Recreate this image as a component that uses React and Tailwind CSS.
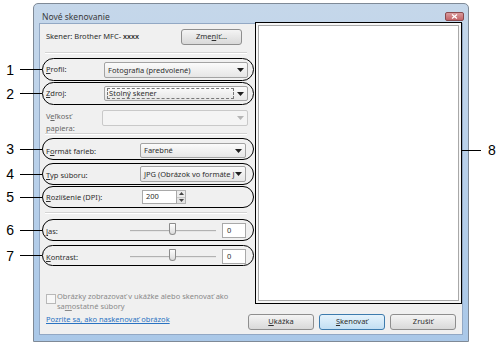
import React from "react";

// small black triangle used by the combo boxes
const Arrow = ({ color = "#1f1f1f" }) => (
  <svg width="7" height="4" viewBox="0 0 7 4" className="shrink-0">
    <path d="M0 0h7L3.5 4z" fill={color} />
  </svg>
);

const Combo = ({ className = "", children, focus, disabled }) => (
  <div
    className={`h-full flex items-center justify-between rounded-[2px] border pl-[2px] pr-[3px] ${
      disabled
        ? "border-[#c9c9c9] bg-[#f4f4f4]"
        : "border-[#a3a3a3] bg-gradient-to-b from-[#fbfbfb] to-[#e6e6e6]"
    } ${className}`}
  >
    {focus ? (
      <span className="flex-1 mr-[3px] h-[11px] flex items-center border border-dashed border-[#777] pl-[1px] leading-[9px]">
        {children}
      </span>
    ) : (
      <span className="pl-[1px] leading-[11px] whitespace-nowrap overflow-hidden">{children}</span>
    )}
    <Arrow color={disabled ? "#b5b5b5" : "#1f1f1f"} />
  </div>
);

const Sep = () => (
  <div className="w-[202px] h-[2px] border-t border-b border-t-[#d3d3d3] border-b-white" />
);

const Slider = () => (
  <div className="w-[86px] h-full relative flex items-center">
    <div className="w-full h-[2px] border-t border-b border-t-[#b2b2b2] border-b-[#e6e6e6]" />
    <div className="absolute left-[39px] top-0 w-[7px] h-[12px] rounded-t-[1px] rounded-b-[4px] border border-[#8c8c8c] bg-gradient-to-b from-[#fdfdfd] to-[#dcdcdc]" />
  </div>
);

const Btn = ({ children, primary }) => (
  <div
    className={`w-[66px] h-[16px] flex items-center justify-center rounded-[3px] border ${
      primary
        ? "border-[#3d7bad] bg-gradient-to-b from-[#e5f3fc] to-[#c2dff3]"
        : "border-[#8e8e8e] bg-gradient-to-b from-[#f4f4f4] to-[#d9d9d9]"
    }`}
  >
    {children}
  </div>
);

const callouts = [
  { n: "1", top: 58, h: 23 },
  { n: "2", top: 82, h: 23 },
  { n: "3", top: 138, h: 22 },
  { n: "4", top: 163, h: 22 },
  { n: "5", top: 186, h: 22 },
  { n: "6", top: 219, h: 22 },
  { n: "7", top: 245, h: 21 },
];

export default function App() {
  return (
    <div className="relative w-[500px] h-[346px] bg-white overflow-hidden font-['Noto_Sans',sans-serif] text-[7.5px] text-[#2e2e2e]">
      {/* dialog window */}
      <div className="ml-[33px] pt-[3px]">
        <div className="w-[436px] h-[339px] flex flex-col rounded-t-[5px] border border-[#7f8a97] bg-gradient-to-b from-[#c5d7ea] via-[#b8d0ea] to-[#aac8e8]">
          <div className="h-[19px] flex items-end justify-between pl-[8px] pr-[4px] pb-[2px]">
            <span className="text-[8.5px] leading-[9px] text-[#3a3a3a]">Nové skenovanie</span>
            <div className="w-[19px] h-[9px] flex items-center justify-center rounded-[2px] border border-[#8a4a4e] bg-gradient-to-b from-[#d99a9d] to-[#c26368]">
              <svg width="7" height="5" viewBox="0 0 7 5">
                <path d="M1 0.5l5 4M6 0.5l-5 4" stroke="#fff" strokeWidth="1.3" />
              </svg>
            </div>
          </div>

          <div className="mx-[5px] h-[312px] border border-[#92a8c4] bg-[#f0f0f0] flex">
            {/* left settings column */}
            <div className="w-[208px] shrink-0 pl-[6px] flex flex-col">
              <div className="mt-[5px] h-[16px] flex items-center justify-between w-[196px]">
                <span>
                  Skener: Brother MFC- <span className="text-[6px] font-bold">XXXX</span>
                </span>
                <div className="w-[61px] h-[16px] flex items-center justify-center rounded-[3px] border border-[#8e8e8e] bg-gradient-to-b from-[#f4f4f4] to-[#d9d9d9]">
                  Zme<u>n</u>iť...
                </div>
              </div>
              <div className="mt-[7px] -ml-[1px]">
                <Sep />
              </div>

              <div className="mt-[8px] h-[16px] flex items-center">
                <span className="w-[59px]">
                  <u>P</u>rofil:
                </span>
                <Combo className="w-[146px]">Fotografia (predvolené)</Combo>
              </div>
              <div className="mt-[8px] h-[15px] flex items-center">
                <span className="w-[59px]">
                  <u>Z</u>droj:
                </span>
                <Combo className="w-[146px]" focus>
                  Stolný skener
                </Combo>
              </div>
              <div className="mt-[9px] h-[23px] flex items-start">
                <span className="w-[59px] leading-[12px] text-[#666]">
                  V<u>e</u>ľkosť
                  <br />
                  papiera:
                </span>
                <div className="h-[16px]">
                  <Combo className="w-[146px]" disabled />
                </div>
              </div>
              <div className="-ml-[1px]">
                <Sep />
              </div>

              <div className="mt-[8px] h-[15px] flex items-center">
                <span className="w-[94px] pt-[3px]">
                  F<u>o</u>rmát farieb:
                </span>
                <Combo className="w-[106px]">Farebné</Combo>
              </div>
              <div className="mt-[8px] h-[16px] flex items-center">
                <span className="w-[94px] pt-[3px]">
                  <u>T</u>yp súboru:
                </span>
                <Combo className="w-[106px]">JPG (Obrázok vo formáte JF</Combo>
              </div>
              <div className="mt-[8px] h-[14px] flex items-center">
                <span className="w-[96px] pt-[2px]">
                  <u>R</u>ozlíšenie (DPI):
                </span>
                <div className="w-[35px] h-full flex items-center pl-[3px] border border-[#a9a9a9] bg-white">200</div>
                <div className="w-[9px] h-full flex flex-col border border-[#b4b4b4] border-l-0">
                  <div className="flex-1 flex items-center justify-center bg-[#ececec] border-b border-[#c8c8c8]">
                    <svg width="5" height="3" viewBox="0 0 5 3"><path d="M0 3h5L2.5 0z" fill="#444" /></svg>
                  </div>
                  <div className="flex-1 flex items-center justify-center bg-[#e4e4e4]">
                    <svg width="5" height="3" viewBox="0 0 5 3"><path d="M0 0h5L2.5 3z" fill="#444" /></svg>
                  </div>
                </div>
              </div>
              <div className="mt-[8px] -ml-[1px]">
                <Sep />
              </div>

              <div className="mt-[9px] h-[15px] flex items-center">
                <span className="w-[84px] pt-[2px]">
                  <u>J</u>as:
                </span>
                <Slider />
                <div className="ml-[6px] w-[24px] h-full flex items-center pl-[4px] border border-[#a9a9a9] bg-white">0</div>
              </div>
              <div className="mt-[11px] h-[15px] flex items-center">
                <span className="w-[84px] pt-[2px]">
                  <u>K</u>ontrast:
                </span>
                <Slider />
                <div className="ml-[6px] w-[24px] h-full flex items-center pl-[4px] border border-[#a9a9a9] bg-white">0</div>
              </div>

              <div className="mt-[27px] flex items-start text-[#8a8a8a]">
                <div className="mt-[3px] w-[10px] h-[10px] border border-[#b8b8b8] bg-[#f7f7f7] shrink-0" />
                <div className="ml-[1px] leading-[10px] whitespace-nowrap">
                  Obrázky zobrazovať v ukážke alebo skenovať ako
                  <br />
                  sa<u>m</u>ostatné súbory
                </div>
              </div>
              <div className="mt-[3px] leading-[10px] text-[#2a73c2] underline whitespace-nowrap">
                Pozrite sa, ako naskenovať obrázok
              </div>
            </div>

            {/* preview + buttons */}
            <div className="w-[214px] shrink-0 flex flex-col">
              <div className="ml-[7px] -mt-[2px] w-[207px] h-[282px] border border-black p-[2px] bg-[#f6f6f6]">
                <div className="w-full h-full border border-[#a8a8a8] bg-white" />
              </div>
              <div className="mt-[10px] flex gap-[5px]">
                <Btn>
                  <u>U</u>kážka
                </Btn>
                <Btn primary>
                  <u>S</u>kenovať
                </Btn>
                <Btn>Zrušiť</Btn>
              </div>
            </div>
          </div>
        </div>
      </div>

      {/* callout annotations */}
      {callouts.map((c) => (
        <React.Fragment key={c.n}>
          <div
            className="absolute left-[42px] w-[212px] rounded-full border-[1.5px] border-black"
            style={{ top: c.top, height: c.h }}
          />
          <div
            className="absolute left-0 w-[42px] flex items-center"
            style={{ top: c.top, height: c.h }}
          >
            <span className="w-[15px] text-right pr-[1px] font-['Liberation_Sans',sans-serif] text-[14px] leading-none text-black">
              {c.n}
            </span>
            <div className="ml-[5px] flex-1 h-px bg-black" />
          </div>
        </React.Fragment>
      ))}
      <div className="absolute left-[462px] top-[140px] h-[20px] w-[38px] flex items-center">
        <div className="w-[19px] h-px bg-black" />
        <span className="ml-[7px] font-['Liberation_Sans',sans-serif] text-[14px] leading-none text-black">8</span>
      </div>
    </div>
  );
}
